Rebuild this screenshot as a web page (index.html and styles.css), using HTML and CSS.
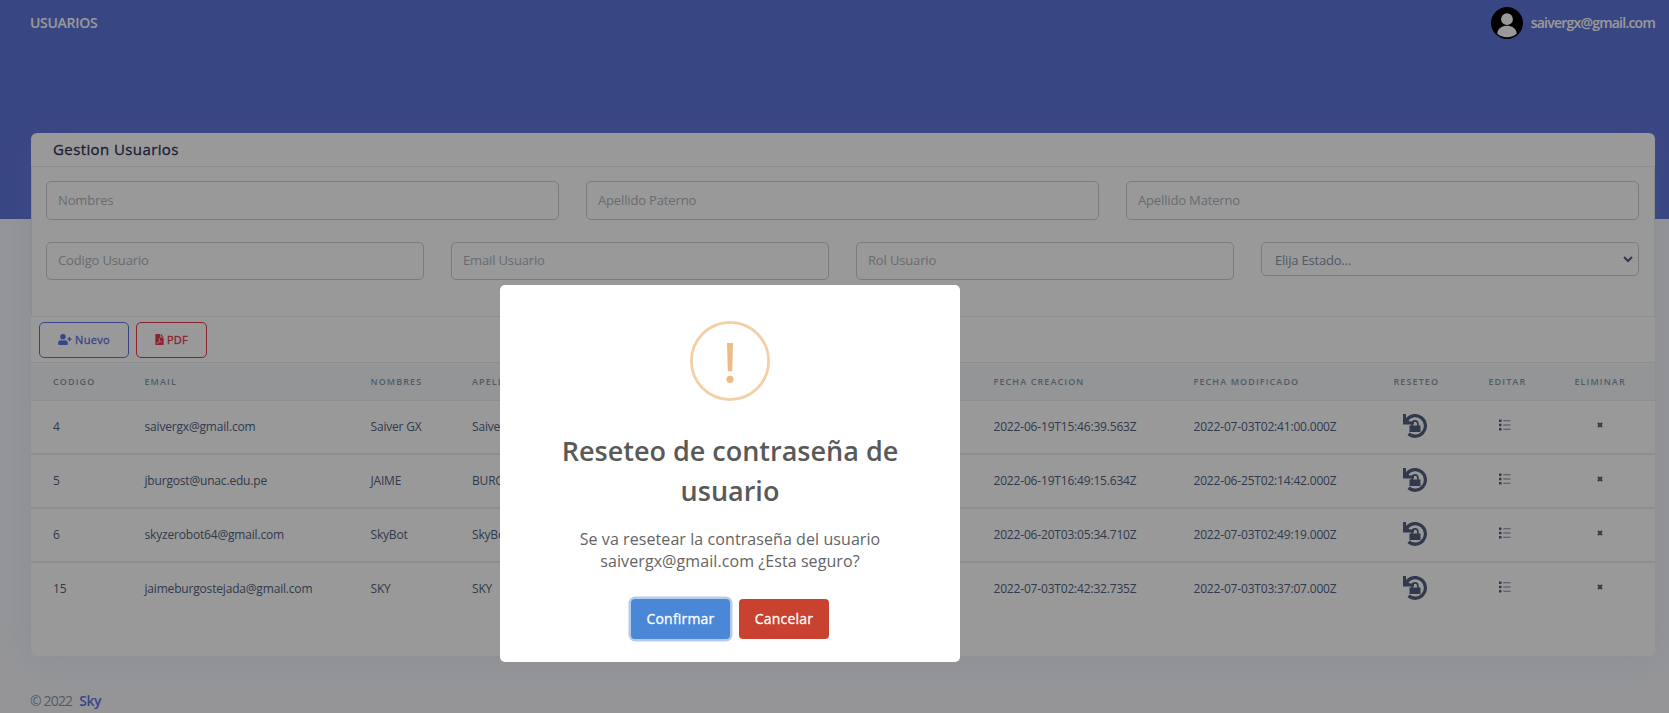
FILE: index.html
```html
<!DOCTYPE html>
<html lang="es">
<head>
<meta charset="utf-8">
<title>Usuarios</title>
<link rel="stylesheet" href="styles.css">
</head>
<body>
<svg class="defs" aria-hidden="true">
  <symbol id="reset" viewBox="0 0 24 24">
    <path d="M0 0h3v4A12 12 0 1 1 4.500 21.300l2-2.800A8.700 8.700 0 1 0 5.500 6.200L6.600 7.400H11V10.600H0z"/>
    <path d="M7 11.500h1.300V9.800a3.700 3.700 0 0 1 7.400 0v1.700H17.500V18H6.500V11.500zm3 0h4V9.800a2 2 0 0 0-4 0z"/>
  </symbol>
  <symbol id="list" viewBox="0 0 12 12">
    <path d="M0 .5h2.500v2.500H0zM0 4.700h2.500v2.500H0zM0 9h2.500v2.500H0z"/>
    <path d="M4.200 1.200H11.500v1H4.200zM4.200 5.400H11.500v1H4.200zM4.200 9.700H11.500v1H4.200z" opacity=".75"/>
  </symbol>
  <symbol id="cross" viewBox="0 0 6 6"><path d="M1 1l4 4M5 1l-4 4" stroke="currentColor" stroke-width="2"/></symbol>
</svg>
<header class="hero">
  <nav class="topbar">
    <span class="brand">USUARIOS</span>
    <div class="account">
      <svg class="avatar" viewBox="0 0 32 32"><circle cx="16" cy="16" r="16" fill="#000"/><circle cx="16" cy="12.200" r="5.900" fill="#fff"/><path d="M6.200 26.500C7 16 25 16 25.800 26.500C21 31.600 11 31.600 6.200 26.500z" fill="#fff"/></svg>
      <span class="account-name">saivergx@gmail.com</span>
    </div>
  </nav>
</header>
<main class="card">
  <h3 class="card-title">Gestion Usuarios</h3>
  <form class="filters">
    <div class="row three">
      <input class="field" placeholder="Nombres">
      <input class="field" placeholder="Apellido Paterno">
      <input class="field" placeholder="Apellido Materno">
    </div>
    <div class="row four">
      <input class="field short" placeholder="Codigo Usuario">
      <input class="field short" placeholder="Email Usuario">
      <input class="field short" placeholder="Rol Usuario">
      <div class="select"><span>Elija Estado...</span><svg width="10" height="7" viewBox="0 0 10 7"><path d="M1 1l4 4 4-4" fill="none" stroke="#525f7f" stroke-width="2"/></svg></div>
    </div>
  </form>
  <div class="actions">
    <button class="btn new"><svg width="14" height="11" viewBox="0 0 640 512"><path fill="currentColor" d="M224 256A128 128 0 1 0 224 0a128 128 0 0 0 0 256zm90 32h-17a174 174 0 0 1-146 0h-17A134 134 0 0 0 0 422v42a48 48 0 0 0 48 48h352a48 48 0 0 0 48-48v-42a134 134 0 0 0-134-134zM624 208h-64v-64h-64v64h-64v64h64v64h64v-64h64z"/></svg><span>Nuevo</span></button>
    <button class="btn pdf"><svg width="9" height="11" viewBox="0 0 384 512"><path fill="currentColor" fill-rule="evenodd" d="M24 0h200v136q0 24 24 24h136v328q0 24-24 24H24q-24 0-24-24V24Q0 0 24 0zM256 0l128 128H256zM178 190c-24 0-24 50-3 98-12 36-28 70-44 98-48 20-67 46-57 60 18 23 49-8 76-54 27-9 55-17 82-20 44 24 75 16 75-3 0-18-28-25-70-20-19-12-33-29-43-55 8-45 8-104-16-104zm10 130c9 15 20 27 31 36l-48 12z"/></svg><span>PDF</span></button>
  </div>
  <table class="users">
    <colgroup><col class="c-code"><col class="c-email"><col class="c-name"><col class="c-last"><col class="c-date"><col class="c-date"><col class="c-reset"><col class="c-edit"><col></colgroup>
    <thead><tr><th>CODIGO</th><th>EMAIL</th><th>NOMBRES</th><th>APELLIDOS</th><th>FECHA CREACION</th><th>FECHA MODIFICADO</th><th>RESETEO</th><th>EDITAR</th><th>ELIMINAR</th></tr></thead>
    <tbody>
      <tr><td>4</td><td>saivergx@gmail.com</td><td>Saiver GX</td><td>Saiver</td><td class="date">2022-06-19T15:46:39.563Z</td><td class="date">2022-07-03T02:41:00.000Z</td><td><svg class="i-reset"><use href="#reset"/></svg></td><td><svg class="i-list"><use href="#list"/></svg></td><td><svg class="i-cross"><use href="#cross"/></svg></td></tr>
      <tr><td>5</td><td>jburgost@unac.edu.pe</td><td>JAIME</td><td>BURGOS</td><td class="date">2022-06-19T16:49:15.634Z</td><td class="date">2022-06-25T02:14:42.000Z</td><td><svg class="i-reset"><use href="#reset"/></svg></td><td><svg class="i-list"><use href="#list"/></svg></td><td><svg class="i-cross"><use href="#cross"/></svg></td></tr>
      <tr><td>6</td><td>skyzerobot64@gmail.com</td><td>SkyBot</td><td>SkyBot</td><td class="date">2022-06-20T03:05:34.710Z</td><td class="date">2022-07-03T02:49:19.000Z</td><td><svg class="i-reset"><use href="#reset"/></svg></td><td><svg class="i-list"><use href="#list"/></svg></td><td><svg class="i-cross"><use href="#cross"/></svg></td></tr>
      <tr><td>15</td><td>jaimeburgostejada@gmail.com</td><td>SKY</td><td>SKY</td><td class="date">2022-07-03T02:42:32.735Z</td><td class="date">2022-07-03T03:37:07.000Z</td><td><svg class="i-reset"><use href="#reset"/></svg></td><td><svg class="i-list"><use href="#list"/></svg></td><td><svg class="i-cross"><use href="#cross"/></svg></td></tr>
    </tbody>
  </table>
</main>
<footer class="footer"><span class="copy">© 2022</span><a class="footer-link">Sky</a></footer>
<div class="overlay">
  <div class="modal" role="dialog">
    <svg class="warn" viewBox="0 0 80 80"><circle cx="40" cy="40" r="38.600" fill="none" stroke="#f3cfa6" stroke-width="2.800"/><path d="M37 22h6l-.8 28.300h-4.400z" fill="#efba83"/><circle cx="40" cy="58.300" r="3.600" fill="#efba83"/></svg>
    <h2 class="modal-title">Reseteo de contraseña de<br>usuario</h2>
    <p class="modal-text">Se va resetear la contraseña del usuario<br>saivergx@gmail.com ¿Esta seguro?</p>
    <div class="modal-actions"><button class="mbtn confirm">Confirmar</button><button class="mbtn cancel">Cancelar</button></div>
  </div>
</div>
</body>
</html>
```

FILE: styles.css
```css
* { box-sizing: border-box; }
body { margin: 0; height: 713px; overflow: hidden; background: #f8f9fe; color: #525f7f; font-family: "Open Sans", sans-serif; }
.defs { position: absolute; width: 0; height: 0; }
.hero { height: 219px; background: #6076dd; }
.topbar { height: 46px; padding: 0 14px 0 30px; display: flex; align-items: center; justify-content: space-between; color: #fff; font-size: 14px; font-weight: 600; }
.brand { letter-spacing: -.3px; padding-bottom: 2px; }
.account { display: flex; align-items: center; gap: 8px; }
.avatar { width: 32px; height: 32px; }
.account-name { letter-spacing: -.77px; padding-bottom: 1px; }

.card { position: relative; margin: -86px 14px 0 30.5px; height: 523px; background: #fff; border-radius: 6px; box-shadow: 0 0 32px rgba(136,152,170,.15); }
.card-title { margin: 0; height: 33px; padding: 0 22.5px; line-height: 33px; font-size: 15px; font-weight: 400; letter-spacing: .4px; -webkit-text-stroke: .3px #32325d; color: #32325d; }
.filters { height: 151px; border: 1px solid #e9ecef; padding: 14px 15px 0 14.5px; display: flex; flex-direction: column; gap: 22px; }
.row { display: grid; column-gap: 27px; align-items: start; }
.three { grid-template-columns: repeat(3, 1fr); }
.four { grid-template-columns: repeat(4, 1fr); }
.field { width: 100%; height: 39px; border: 1px solid #cad1d7; border-radius: 5px; padding: 0 11px 2px; font: 400 13px "Open Sans", sans-serif; letter-spacing: -.15px; background: #fff; }
.field.short { height: 38px; }
.field::placeholder { color: #adb5bd; }
.select { height: 34px; border: 1px solid #cad1d7; border-radius: 5px; padding: 2px 5px 0 13px; display: flex; align-items: center; justify-content: space-between; font-size: 13px; color: #8898aa; }
.select span { letter-spacing: -.2px; }
.select svg { margin-top: -2px; }
.actions { height: 45px; padding: 5px 8.5px 0; display: flex; gap: 7px; }
.btn { height: 36px; border: 1px solid; border-radius: 5px; background: transparent; display: flex; align-items: center; justify-content: center; gap: 3px; padding: 0 0 1px; font: 400 11px "Open Sans", sans-serif; letter-spacing: .3px; -webkit-text-stroke: .3px currentColor; }
.new { width: 90px; color: #5e72e4; }
.pdf { width: 71px; color: #e63950; }

.users { width: 100%; table-layout: fixed; border-collapse: separate; border-spacing: 0; }
.c-code { width: 91.5px; }
.c-email { width: 226px; }
.c-name { width: 101.500px; }
.c-last { width: 521.5px; }
.c-date { width: 200px; }
.c-reset { width: 95px; }
.c-edit { width: 86px; }
.users th { height: 39px; padding: 0 0 0 22.5px; border-top: 1px solid #e9ecef; border-bottom: 1px solid #e9ecef; background: #f6f9fc; color: #8898aa; text-align: left; font-size: 9px; font-weight: 600; letter-spacing: 1.1px; white-space: nowrap; }
.users td { height: 54px; padding: 0 0 2px 22.5px; border-bottom: 2px solid #e9ecef; font-size: 12px; letter-spacing: -.18px; white-space: nowrap; }
.users tr:last-child td { border-bottom-color: transparent; }
.users svg { display: block; fill: #525f7f; color: #525f7f; }
.i-reset { width: 24px; height: 24px; margin-left: 9px; }
.i-list { width: 12px; height: 12px; margin: 0 0 2px 10px; }
.i-cross { width: 6px; height: 6px; margin: 0 0 2px 22px; }
.footer { padding: 34px 30px 0; font-size: 14px; line-height: 22px; color: #8898aa; display: flex; gap: 7px; }
.copy { letter-spacing: -.85px; }
.footer-link { color: #5e72e4; font-weight: 600; letter-spacing: -.5px; }

.overlay { position: fixed; inset: 0; background: rgba(0,0,0,.4); }
.modal { position: absolute; left: 500px; top: 285px; width: 460px; height: 377px; background: #fff; border-radius: 5px; padding-top: 36px; text-align: center; }
.warn { display: block; width: 80px; height: 80px; margin: 0 auto; }
.modal-title { margin: 30px 0 0; font-size: 27px; line-height: 40px; font-weight: 600; color: #595959; }
.modal-text { margin: 17px 0 0; font-size: 16px; line-height: 22px; letter-spacing: .08px; color: #646464; }
.modal-actions { display: flex; justify-content: center; gap: 9px; margin-top: 27px; }
.mbtn { height: 40px; border: 0; border-radius: 4px; padding: 0 0 2px; color: #fff; font: 400 14px "Open Sans", sans-serif; letter-spacing: .2px; -webkit-text-stroke: .3px #fff; }
.confirm { width: 99px; background: #4a87d6; box-shadow: 0 0 0 2.5px #b6cbe7; }
.cancel { width: 90px; background: #c8422f; }
```
